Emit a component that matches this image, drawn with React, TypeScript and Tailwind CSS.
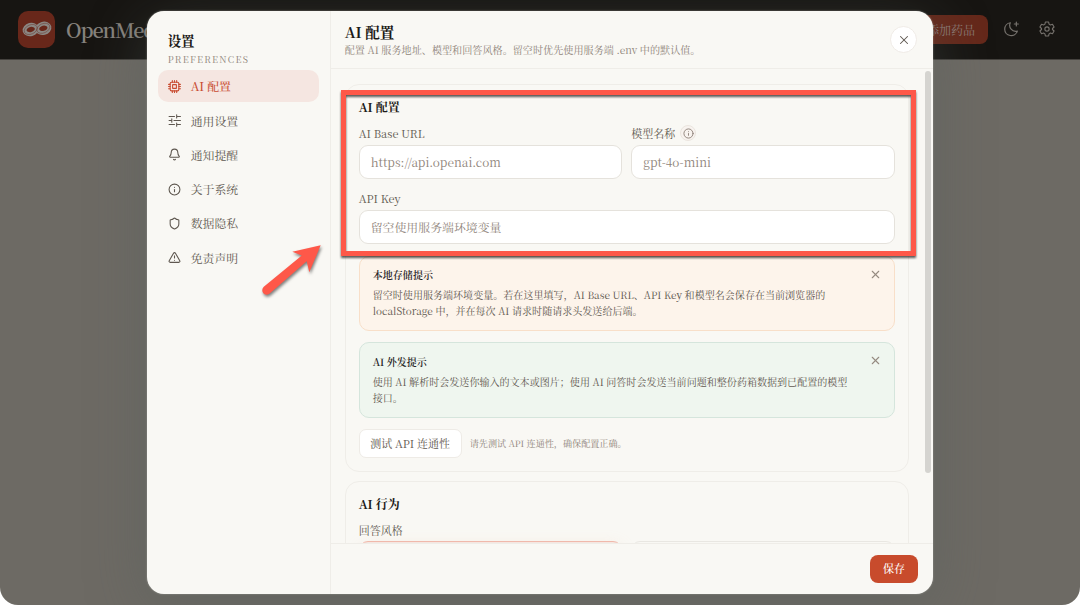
import React, { useState } from 'react'
import { Bell, Info, Shield, TriangleAlert, X } from 'lucide-react'

interface NavItem {
  key: string
  label: string
  icon: React.ReactNode
}

const ChipIcon = () => (
  <svg viewBox="0 0 24 24" className="w-[13px] h-[13px]" fill="none" stroke="currentColor" strokeWidth="2" strokeLinecap="round" strokeLinejoin="round">
    <rect x="4" y="4" width="16" height="16" rx="2.5" />
    <rect x="8.5" y="8.5" width="7" height="7" rx="0.5" />
    <path d="M8 1v3M12 1v3M16 1v3M8 20v3M12 20v3M16 20v3M1 8h3M1 12h3M1 16h3M20 8h3M20 12h3M20 16h3" />
  </svg>
)

const SlidersIcon = () => (
  <svg viewBox="0 0 24 24" className="w-[13px] h-[13px]" fill="none" stroke="currentColor" strokeWidth="2" strokeLinecap="round">
    <path d="M2 4.5h10M16 4.5h7M16 1.5v6M2 12h5M7 9v6M11 12h12M2 19.5h10M16 19.5h7M16 16.5v6" />
  </svg>
)

const MoonIcon = () => (
  <svg viewBox="0 0 24 24" className="w-4 h-4" fill="none" stroke="currentColor" strokeWidth="1.8" strokeLinecap="round" strokeLinejoin="round">
    <path d="M11 2.6a9.7 9.7 0 1 0 10.5 12.6A9 9 0 0 1 11 2.6z" />
    <path d="M20 1.5v6M17 4.5h6" />
  </svg>
)

const GearIcon = () => (
  <svg viewBox="0 0 24 24" className="w-4 h-4" fill="none" stroke="currentColor" strokeWidth="1.7" strokeLinejoin="round">
    <path d="M9.6 1.5h4.8l.7 3.2 2 1.2 3.1-1 2.4 4.1-2.4 2.2v1.6l2.4 2.2-2.4 4.1-3.1-1-2 1.2-.7 3.2H9.6l-.7-3.2-2-1.2-3.1 1L1.4 15l2.4-2.2v-1.6L1.4 9l2.4-4.1 3.1 1 2-1.2z" />
    <circle cx="12" cy="12" r="3.2" />
  </svg>
)

const Logo = () => (
  <svg viewBox="0 0 32 20" className="w-8 h-5 -mt-[2px]" fill="none" stroke="#8b8783">
    <g strokeWidth="4">
      <ellipse cx="9.7" cy="10.5" rx="6.2" ry="4.6" transform="rotate(-14 9.7 10.5)" />
      <ellipse cx="22.3" cy="9.3" rx="6.2" ry="4.6" transform="rotate(-14 22.3 9.3)" />
    </g>
    <g stroke="#68271a" strokeWidth="0.4">
      <ellipse cx="9.7" cy="10.5" rx="6.8" ry="4.6" transform="rotate(-24 9.7 10.5)" />
      <ellipse cx="22.3" cy="9.3" rx="6.8" ry="4.6" transform="rotate(-24 22.3 9.3)" />
    </g>
  </svg>
)

const navItems: NavItem[] = [
  { key: 'ai', label: 'AI 配置', icon: <ChipIcon /> },
  { key: 'general', label: '通用设置', icon: <SlidersIcon /> },
  { key: 'notify', label: '通知提醒', icon: <Bell className="w-[13px] h-[13px]" /> },
  { key: 'about', label: '关于系统', icon: <Info className="w-[13px] h-[13px]" /> },
  { key: 'privacy', label: '数据隐私', icon: <Shield className="w-[13px] h-[13px]" /> },
  { key: 'disclaimer', label: '免责声明', icon: <TriangleAlert className="w-[13px] h-[13px]" /> },
]

interface FieldProps {
  label: string
  placeholder: string
  info?: boolean
}

const Field: React.FC<FieldProps> = ({ label, placeholder, info }) => (
  <div className="flex-1 min-w-0">
    <div className="flex items-center h-[15px] mb-1 gap-[5px] text-[11px] text-[#5f5850]">
      <span className="-mt-px">{label}</span>
      {info && (
        <span className="flex items-center justify-center w-4 h-4 -mt-px rounded-full border border-[#ebe5df] bg-[#f8f3ef] text-[#8c8077]">
          <Info className="w-[11px] h-[11px]" />
        </span>
      )}
    </div>
    <div className="flex items-center h-[34.3px] px-[11px] rounded-[9px] border border-[#e5e2dc] bg-white text-[11.9px] text-[#8f847a]">
      <span>{placeholder}</span>
    </div>
  </div>
)

interface NoticeProps {
  title: string
  lines: string[]
  className: string
}

const Notice: React.FC<NoticeProps> = ({ title, lines, className }) => (
  <div className={`flex justify-between rounded-[10px] border px-[13px] text-[10.06px] ${className}`}>
    <div>
      <div className="font-semibold leading-4 text-[#25221e]">{title}</div>
      <div className="mt-1 leading-4 text-[#5f5850] whitespace-nowrap">
        {lines.map(line => (
          <div key={line}>{line}</div>
        ))}
      </div>
    </div>
    <X className="w-[13px] h-[13px] mt-[0.5px] -mr-px text-[#958b81]" strokeWidth={2} />
  </div>
)

export default function App() {
  const [active, setActive] = useState('ai')

  return (
    <div className="relative w-[1080px] h-[605px] overflow-hidden bg-white font-['Noto_Serif_CJK_SC','Liberation_Serif','Noto_Sans_CJK_SC',serif]">
      <div className="w-full h-full rounded-b-[18px] overflow-hidden bg-[#6d6a64]">
        <header className="flex items-center justify-between h-[60px] border-b border-[#45423e] bg-[#171512] pl-[18px] pr-[25px] text-[#76726d]">
          <div className="flex items-center gap-[11px]">
            <div className="flex items-center justify-center w-[37px] h-[37px] rounded-[10px] bg-[#68271a]">
              <Logo />
            </div>
            <span className="text-[20px] font-semibold tracking-[-0.055em] text-[#86827d]">OpenMed</span>
          </div>
          <div className="flex items-center">
            <div className="flex items-center h-[29px] w-[96px] justify-end pr-[13px] rounded-[8px] bg-[#65281a] text-[12px] text-[#8c7b75]">添加药品</div>
            <div className="ml-[15px] -mt-px"><MoonIcon /></div>
            <div className="ml-[20px] -mt-px"><GearIcon /></div>
          </div>
        </header>
      </div>

      <div className="absolute left-[146.7px] top-[11px] flex w-[786.6px] h-[583px] rounded-[17px] overflow-hidden bg-[#f9f8f4] shadow-[0_14px_60px_rgba(84,94,90,0.45),0_0_2px_rgba(220,218,212,0.6)]">
        <aside className="w-[184px] shrink-0 border-r border-[#efede8] px-[11px] pt-[20px]">
          <div className="pl-[10px] h-5 leading-5 text-[13.4px] font-bold text-[#1c1a17]">设置</div>
          <div className="pl-[10px] mt-px h-[14px] leading-[14px] text-[9.2px] tracking-[0.14em] text-[#8f847a]">PREFERENCES</div>
          <nav className="mt-[4px] flex flex-col gap-[2px]">
            {navItems.map(item => (
              <button
                key={item.key}
                onClick={() => setActive(item.key)}
                className={`flex items-center gap-[10px] h-[32.3px] px-[10px] rounded-[10px] text-[11.9px] ${
                  active === item.key ? 'bg-[#f5e6e1] text-[#c94d32] font-medium' : 'text-[#5f5850]'
                }`}
              >
                {item.icon}
                <span>{item.label}</span>
              </button>
            ))}
          </nav>
        </aside>

        <main className="flex flex-col flex-1 min-w-0">
          <div className="flex items-center justify-between h-[58px] shrink-0 border-b border-[#efede8] pl-[14px] pr-[16px]">
            <div>
              <div className="h-5 leading-5 text-[14.5px] font-bold text-[#1c1a17]">AI 配置</div>
              <div className="h-[15px] leading-[15px] text-[10.12px] text-[#8f847a]">
                配置 AI 服务地址、模型和回答风格。留空时优先使用服务端 .env 中的默认值。
              </div>
            </div>
            <button className="flex items-center justify-center w-[27px] h-[27px] rounded-full border border-[#efebe6] bg-white text-[#5e5750]">
              <X className="w-[14px] h-[14px]" strokeWidth={1.8} />
            </button>
          </div>

          <div className="flex flex-1 min-h-0 justify-between pl-[14px] pr-[2.3px]">
            <div className="w-[564px] h-[474px] overflow-hidden pt-[15px]">
              <section className="h-[388px] rounded-[14px] border border-[#efede8] px-[13px] pt-[14px]">
                <h3 className="h-4 leading-4 text-[12px] font-bold text-[#1c1a17]">AI 配置</h3>
                <div className="flex gap-[9px] mt-[11px]">
                  <Field label="AI Base URL" placeholder="https://api.openai.com" />
                  <Field label="模型名称" placeholder="gpt-4o-mini" info />
                </div>
                <div className="flex mt-[11.7px]">
                  <Field label="API Key" placeholder="留空使用服务端环境变量" />
                </div>
                <Notice
                  className="mt-[11.7px] h-[75px] pt-[10.5px] border-[#f8dfc9] bg-[#fdf4eb]"
                  title="本地存储提示"
                  lines={[
                    '留空时使用服务端环境变量。若在这里填写，AI Base URL、API Key 和模型名会保存在当前浏览器的',
                    'localStorage 中，并在每次 AI 请求时随请求头发送给后端。',
                  ]}
                />
                <Notice
                  className="mt-[11px] h-[76px] pt-[11px] border-[#d5e5dc] bg-[#eff6ef]"
                  title="AI 外发提示"
                  lines={[
                    '使用 AI 解析时会发送你输入的文本或图片；使用 AI 问答时会发送当前问题和整份药箱数据到已配置的模型',
                    '接口。',
                  ]}
                />
                <div className="flex items-center gap-[8px] mt-[11px]">
                  <button className="w-[103px] h-[29px] rounded-[7px] border border-[#eeebe6] bg-white text-[11px] text-[#5f5850] whitespace-nowrap">
                    测试 API 连通性
                  </button>
                  <span className="text-[9.1px] text-[#8f847a]">请先测试 API 连通性，确保配置正确。</span>
                </div>
              </section>

              <section className="mt-[9px] h-[120px] rounded-[14px] border border-[#efede8] px-[13px] pt-[14px]">
                <h3 className="h-4 leading-4 text-[12px] font-bold text-[#1c1a17]">AI 行为</h3>
                <div className="h-[15px] leading-[15px] mt-[11px] text-[11px] text-[#5f5850]">回答风格</div>
                <div className="flex gap-[9px] mt-[3px]">
                  <div className="flex-1 h-10 rounded-[9px] border border-[#f0b9ab] bg-[#f5e6e1] shadow-[0_4px_16px_rgba(240,190,160,0.2)]" />
                  <div className="flex-1 h-10 rounded-[9px] border border-[#e9e7e2]" />
                </div>
              </section>
            </div>
            <div className="w-[6px] h-[402px] mt-[2px] rounded-full bg-[#d5d4d0]" />
          </div>

          <div className="flex items-center justify-end h-[51px] shrink-0 border-t border-[#efede8] pr-[15.3px]">
            <button className="w-[48px] h-[28px] -mt-px rounded-[8px] bg-[#c84b2c] text-white text-[11px] font-medium">保存</button>
          </div>
        </main>
      </div>

      {/* highlight frame and pointer */}
      <div className="absolute left-[341px] top-[90px] w-[575px] h-[166px] border-[5px] border-[#fe5849] drop-shadow-[0_2px_1px_rgba(20,20,20,0.7)]" />
      <svg className="absolute left-[255px] top-[238px] drop-shadow-[1px_2px_1.5px_rgba(0,0,0,0.5)]" width="75" height="65" viewBox="255 238 75 65">
        <path fill="#fe5849" d="M320.7 245.3L292.3 251.7L301.8 255.5L263.8 286.8A4.2 4.2 0 0 0 269.7 293.6L306.7 261.2L309.3 272.3Z" />
      </svg>
    </div>
  )
}
